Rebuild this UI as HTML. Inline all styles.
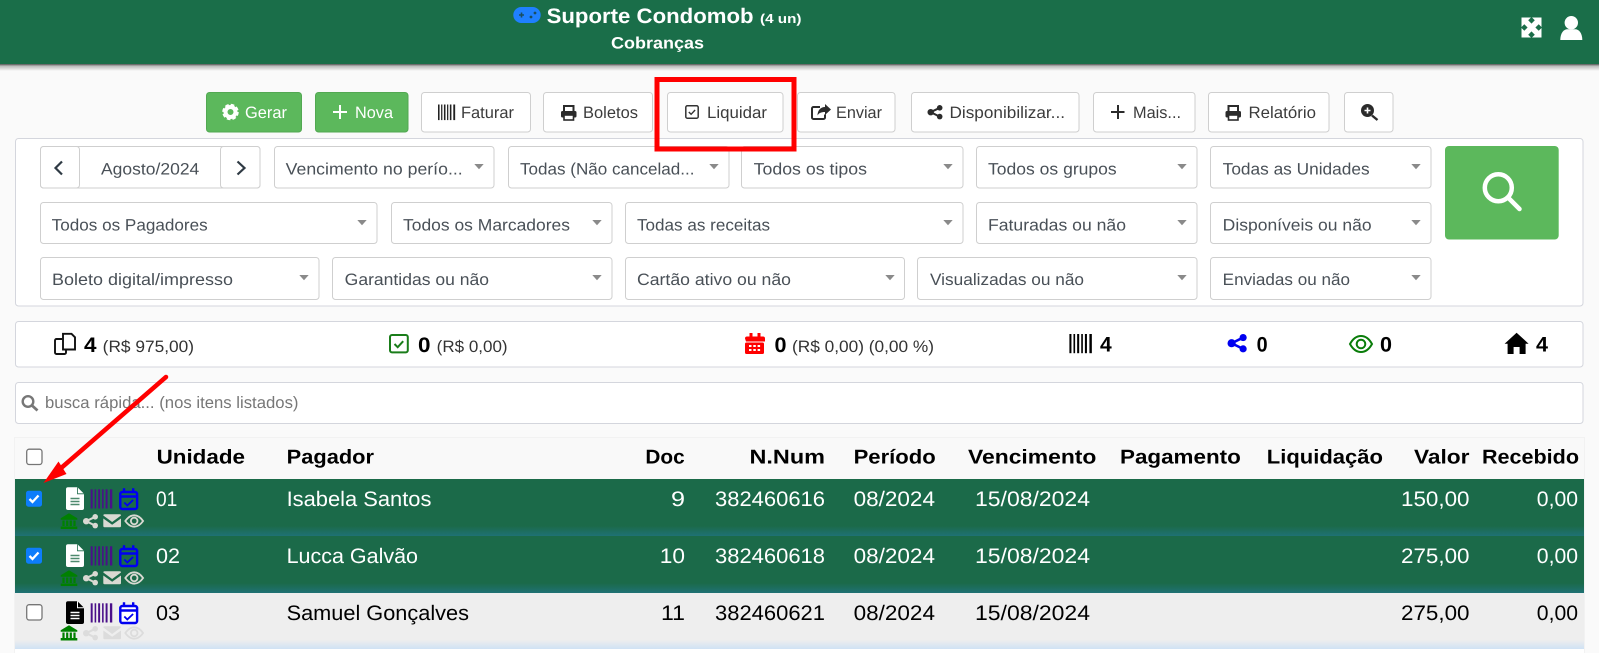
<!DOCTYPE html>
<html lang="pt-BR"><head><meta charset="utf-8"><title>Cobranças</title>
<style>
html,body{margin:0;padding:0;background:#fafafa;width:1599px;height:653px;overflow:hidden}
svg{display:block;font-family:"Liberation Sans",sans-serif;text-rendering:geometricPrecision}
text{lengthAdjust:spacingAndGlyphs}
.box{fill:#fff;stroke:#d4d6dd;stroke-width:1}
.btn{fill:#fff;stroke:#cfcfcf;stroke-width:1}
.bt{font-size:16.5px;fill:#3c3c3c}
.sel{font-size:16.5px;fill:#495057}
.th{font-size:20px;font-weight:bold;fill:#000}
.w{font-size:21px;fill:#fff}
.k{font-size:21px;fill:#000}
.n{font-size:21px;font-weight:bold;fill:#000}
.s{font-size:16.5px;fill:#333}
</style></head><body>
<svg xmlns="http://www.w3.org/2000/svg" width="1599" height="653" viewBox="0 0 1599 653">
<defs>
<linearGradient id="hs" x1="0" y1="0" x2="0" y2="1"><stop offset="0" stop-color="#555"/><stop offset=".3" stop-color="#bbb"/><stop offset="1" stop-color="#fafafa"/></linearGradient>
<linearGradient id="gr" x1="0" y1="0" x2="0" y2="1"><stop offset="0" stop-color="#1b6a49"/><stop offset="1" stop-color="#1f7174"/></linearGradient>
<linearGradient id="bl" x1="0" y1="0" x2="0" y2="1"><stop offset="0" stop-color="#eeeeee"/><stop offset="1" stop-color="#cfe2f4"/></linearGradient>
<g id="bc"><rect x="0" y="0" width="2" height="20"/><rect x="4" y="0" width="1.6" height="20"/><rect x="7.6" y="0" width="2" height="20"/><rect x="11.6" y="0" width="1.6" height="20"/><rect x="15.2" y="0" width="2" height="20"/><rect x="19.6" y="0" width="2.4" height="20"/></g>
<g id="arrow"><path d="M0 0h9.4l-4.7 5.3z" fill="#8a8a8a"/></g>
<g id="share"><circle cx="3.2" cy="7.2" r="3.2"/><circle cx="12.2" cy="2.8" r="2.8"/><circle cx="12.2" cy="11.6" r="2.8"/><path d="M3.2 7.2L12.2 2.8M3.2 7.2L12.2 11.6" stroke="currentColor" stroke-width="2" fill="none"/></g>
<g id="printer"><path d="M3 6V1h9.5V6" fill="none" stroke="currentColor" stroke-width="2"/><rect x="0" y="6" width="15.5" height="6.5" rx="1.5"/><rect x="3" y="10" width="9.5" height="5" fill="#fff" stroke="currentColor" stroke-width="1.6"/></g>
</defs>

<!-- header -->
<rect width="1599" height="64" fill="#1a6e49"/>
<rect y="64" width="1599" height="7" fill="url(#hs)"/>
<rect x="513.3" y="7" width="27.4" height="16" rx="8" fill="#1f80ff"/>
<path d="M519 15h5M521.500 12.500v5" stroke="#1a4e60" stroke-width="1.6"/><circle cx="531" cy="17" r="1.400" fill="#1a4e60"/><circle cx="535" cy="13" r="1.400" fill="#1a4e60"/>
<text x="546.6" y="23" font-size="21" font-weight="bold" fill="#fff" textLength="207" lengthAdjust="spacingAndGlyphs">Suporte Condomob</text>
<text x="760" y="23" font-size="13" font-weight="bold" fill="#fff" textLength="41.5" lengthAdjust="spacingAndGlyphs">(4 un)</text>
<text x="611" y="48.500" font-size="16.500" font-weight="bold" fill="#fff" textLength="93" lengthAdjust="spacingAndGlyphs">Cobranças</text>
<g fill="#fff"><path d="M1521.500 17.500h9.500l-2.800 2.800 3.300 3.300 3.300-3.300-2.800-2.800h9.500v9.500l-2.800-2.800-3.300 3.300 3.300 3.300 2.800-2.800v9.500h-9.500l2.800-2.800-3.300-3.300-3.300 3.300 2.800 2.800h-9.500v-9.500l2.800 2.800 3.300-3.300-3.300-3.300-2.800 2.800z"/>
<circle cx="1571.300" cy="22.700" r="6.700"/><path d="M1560.300 40c0-7 3.500-10.700 7-10.700h8c3.500 0 7 3.700 7 10.700z"/></g>

<!-- toolbar -->
<rect x="206.500" y="92.500" width="95" height="39.500" rx="3" fill="#5cb85c" stroke="#52a852"/>
<rect x="315.500" y="92.500" width="92.500" height="39.500" rx="3" fill="#5cb85c" stroke="#52a852"/>
<rect class="btn" x="421.500" y="92.500" width="109" height="39.500" rx="3"/>
<rect class="btn" x="543.500" y="92.500" width="109" height="39.500" rx="3"/>
<rect class="btn" x="667.500" y="92.500" width="115.500" height="39.500" rx="3"/>
<rect class="btn" x="797.500" y="92.500" width="97.500" height="39.500" rx="3"/>
<rect class="btn" x="911.500" y="92.500" width="167.500" height="39.500" rx="3"/>
<rect class="btn" x="1093.500" y="92.500" width="101.500" height="39.500" rx="3"/>
<rect class="btn" x="1208.500" y="92.500" width="120.500" height="39.500" rx="3"/>
<rect class="btn" x="1344.500" y="92.500" width="48.500" height="39.500" rx="3"/>

<circle cx="230.500" cy="112" r="5" fill="none" stroke="#fff" stroke-width="4"/><circle cx="230.500" cy="112" r="7" fill="none" stroke="#fff" stroke-width="2.500" stroke-dasharray="3.500 2"/>
<text class="bt" style="fill:#fff" x="245" y="118" textLength="42" lengthAdjust="spacingAndGlyphs">Gerar</text>
<path d="M340 105v14M333 112h14" stroke="#fff" stroke-width="2"/>
<text class="bt" style="fill:#fff" x="355" y="118" textLength="38" lengthAdjust="spacingAndGlyphs">Nova</text>
<use href="#bc" transform="translate(438 104.500) scale(.78 .78)" fill="#222"/>
<text class="bt" x="461" y="118" textLength="53" lengthAdjust="spacingAndGlyphs">Faturar</text>
<use href="#printer" transform="translate(561 105)" color="#2b2b2b" fill="#2b2b2b"/>
<text class="bt" x="583" y="118" textLength="55" lengthAdjust="spacingAndGlyphs">Boletos</text>
<rect x="685.800" y="105.800" width="12.400" height="12.400" rx="1.500" fill="none" stroke="#333" stroke-width="1.500"/><path d="M688.800 112l2.300 2.300 4-4.300" fill="none" stroke="#333" stroke-width="1.400"/>
<text class="bt" x="707" y="118" textLength="60" lengthAdjust="spacingAndGlyphs">Liquidar</text>
<path d="M820 107h-6.500a1.500 1.500 0 0 0-1.500 1.500v9a1.500 1.500 0 0 0 1.500 1.500h10a1.500 1.500 0 0 0 1.500-1.500v-3" fill="none" stroke="#2b2b2b" stroke-width="2"/><path d="M825 104l6 5.500-6 5.500v-3c-4 0-6 1-7.500 3.500 0-5 3-8.500 7.500-8.500z" fill="#2b2b2b"/>
<text class="bt" x="836" y="118" textLength="46" lengthAdjust="spacingAndGlyphs">Enviar</text>
<use href="#share" transform="translate(927.500 105)" color="#2b2b2b" fill="#2b2b2b"/>
<text class="bt" x="949.500" y="118" textLength="115.500" lengthAdjust="spacingAndGlyphs">Disponibilizar...</text>
<path d="M1118 105v14M1111 112h13.500" stroke="#2b2b2b" stroke-width="2"/>
<text class="bt" x="1133" y="118" textLength="48" lengthAdjust="spacingAndGlyphs">Mais...</text>
<use href="#printer" transform="translate(1225.500 105)" color="#2b2b2b" fill="#2b2b2b"/>
<text class="bt" x="1248.500" y="118" textLength="67.500" lengthAdjust="spacingAndGlyphs">Relatório</text>
<circle cx="1367.500" cy="110.500" r="6.500" fill="#2b2b2b"/><path d="M1372 115.500l5.500 4.500" stroke="#2b2b2b" stroke-width="2.400"/><path d="M1367.500 107.500v6M1364.500 110.500h6" stroke="#fff" stroke-width="1.600"/>

<!-- filter panel -->
<rect class="box" x="15.500" y="138.500" width="1567.500" height="167.500" rx="3"/>
<rect class="btn" x="40.500" y="146.500" width="219.500" height="41.500" rx="3" stroke="#ccd0d8"/>
<rect class="btn" x="40.500" y="146.500" width="39" height="41.500" rx="3" stroke="#ccd0d8"/>
<rect class="btn" x="220.500" y="146.500" width="39.500" height="41.500" rx="3" stroke="#ccd0d8"/>
<path d="M62 161.500l-6.500 6.500 6.500 6.500" fill="none" stroke="#2f3a44" stroke-width="2.200"/><path d="M237.500 161.500l7 6.500-7 6.500" fill="none" stroke="#2f3a44" stroke-width="2.200"/>
<text class="sel" x="101" y="174.300" textLength="98.300" lengthAdjust="spacingAndGlyphs">Agosto/2024</text>

<g class="btn" stroke="#ccd0d8">
<rect x="274.500" y="146.500" width="219.500" height="41.500" rx="3"/>
<rect x="508.500" y="146.500" width="220.500" height="41.500" rx="3"/>
<rect x="741.500" y="146.500" width="221.500" height="41.500" rx="3"/>
<rect x="976.500" y="146.500" width="220.500" height="41.500" rx="3"/>
<rect x="1210.500" y="146.500" width="220.500" height="41.500" rx="3"/>
<rect x="40.500" y="202.500" width="336.500" height="41" rx="3"/>
<rect x="391.500" y="202.500" width="220.500" height="41" rx="3"/>
<rect x="625.500" y="202.500" width="337.500" height="41" rx="3"/>
<rect x="976.500" y="202.500" width="220.500" height="41" rx="3"/>
<rect x="1210.500" y="202.500" width="220.500" height="41" rx="3"/>
<rect x="40.500" y="257.500" width="278.500" height="42" rx="3"/>
<rect x="332.500" y="257.500" width="279.500" height="42" rx="3"/>
<rect x="625.500" y="257.500" width="279" height="42" rx="3"/>
<rect x="917.500" y="257.500" width="279.500" height="42" rx="3"/>
<rect x="1210.500" y="257.500" width="220.500" height="42" rx="3"/>
</g>
<g class="sel">
<text x="285.700" y="174.300" textLength="177" lengthAdjust="spacingAndGlyphs">Vencimento no perío...</text>
<text x="520" y="174.300" textLength="174.500" lengthAdjust="spacingAndGlyphs">Todas (Não cancelad...</text>
<text x="753.600" y="174.300" textLength="113.400" lengthAdjust="spacingAndGlyphs">Todos os tipos</text>
<text x="988" y="174.300" textLength="128.700" lengthAdjust="spacingAndGlyphs">Todos os grupos</text>
<text x="1222.700" y="174.300" textLength="146.900" lengthAdjust="spacingAndGlyphs">Todas as Unidades</text>
<text x="51.700" y="230.300" textLength="156" lengthAdjust="spacingAndGlyphs">Todos os Pagadores</text>
<text x="403" y="230.300" textLength="167" lengthAdjust="spacingAndGlyphs">Todos os Marcadores</text>
<text x="637" y="230.300" textLength="133" lengthAdjust="spacingAndGlyphs">Todas as receitas</text>
<text x="988" y="230.300" textLength="138" lengthAdjust="spacingAndGlyphs">Faturadas ou não</text>
<text x="1222.700" y="230.300" textLength="148.900" lengthAdjust="spacingAndGlyphs">Disponíveis ou não</text>
<text x="52" y="285" textLength="181" lengthAdjust="spacingAndGlyphs">Boleto digital/impresso</text>
<text x="344.700" y="285" textLength="144.300" lengthAdjust="spacingAndGlyphs">Garantidas ou não</text>
<text x="637" y="285" textLength="154" lengthAdjust="spacingAndGlyphs">Cartão ativo ou não</text>
<text x="930" y="285" textLength="154" lengthAdjust="spacingAndGlyphs">Visualizadas ou não</text>
<text x="1222.700" y="285" textLength="127.300" lengthAdjust="spacingAndGlyphs">Enviadas ou não</text>
</g>
<use href="#arrow" x="474.300" y="164"/><use href="#arrow" x="709.300" y="164"/><use href="#arrow" x="943.300" y="164"/><use href="#arrow" x="1177.300" y="164"/><use href="#arrow" x="1411.300" y="164"/>
<use href="#arrow" x="357.300" y="220"/><use href="#arrow" x="592.300" y="220"/><use href="#arrow" x="943.300" y="220"/><use href="#arrow" x="1177.300" y="220"/><use href="#arrow" x="1411.300" y="220"/>
<use href="#arrow" x="299.300" y="275"/><use href="#arrow" x="592.300" y="275"/><use href="#arrow" x="885.300" y="275"/><use href="#arrow" x="1177.300" y="275"/><use href="#arrow" x="1411.300" y="275"/>

<rect x="1445" y="146" width="113.700" height="93.500" rx="4" fill="#5cb85c"/>
<circle cx="1498.300" cy="187.700" r="13.500" fill="none" stroke="#fff" stroke-width="4.500"/><path d="M1508.500 198l11 11" stroke="#fff" stroke-width="4.500" stroke-linecap="round"/>

<!-- stats -->
<rect class="box" x="15.500" y="321.500" width="1567.500" height="45.500" rx="3"/>
<path d="M63 333.800h8.500l3.500 3.500v12.200h-12z" fill="none" stroke="#111" stroke-width="1.900"/><path d="M62 339h-5.500a1.500 1.500 0 0 0-1.500 1.500v12a1.500 1.500 0 0 0 1.500 1.500h8a1.500 1.500 0 0 0 1.500-1.500v-3" fill="none" stroke="#111" stroke-width="1.900"/>
<text class="n" x="84" y="352" textLength="12.500" lengthAdjust="spacingAndGlyphs">4</text>
<text class="s" x="102.700" y="352" textLength="91.300" lengthAdjust="spacingAndGlyphs">(R$ 975,00)</text>
<rect x="390" y="335" width="17.800" height="17.400" rx="2" fill="none" stroke="#1a7d1a" stroke-width="2"/><path d="M394.500 344l3.200 3.200 5.500-6" fill="none" stroke="#1a7d1a" stroke-width="2"/>
<text class="n" x="418" y="352" textLength="12.500" lengthAdjust="spacingAndGlyphs">0</text>
<text class="s" x="436.700" y="352" textLength="70.900" lengthAdjust="spacingAndGlyphs">(R$ 0,00)</text>
<path d="M745 338.500a2 2 0 0 1 2-2h2.500v-3.500h3v3.500h5v-3.500h3v3.500h2.500a2 2 0 0 1 2 2v3h-19z" fill="#f00"/><rect x="745" y="342.500" width="19" height="11.500" rx="1.500" fill="#f00"/><path d="M749 345h2.500v2h-2.500zm4.300 0h2.500v2h-2.500zm4.300 0h2.500v2h-2.500zm-8.600 4h2.500v2h-2.500zm4.300 0h2.500v2h-2.500zm4.300 0h2.500v2h-2.500z" fill="#fff"/>
<text class="n" x="774.500" y="352" textLength="12" lengthAdjust="spacingAndGlyphs">0</text>
<text class="s" x="792" y="352" textLength="142" lengthAdjust="spacingAndGlyphs">(R$ 0,00) (0,00 %)</text>
<use href="#bc" transform="translate(1069.400 334) scale(1.020 .96)" fill="#000"/>
<text class="n" x="1100" y="351.700" textLength="11.700" lengthAdjust="spacingAndGlyphs">4</text>
<use href="#share" transform="translate(1227.500 334) scale(1.280)" color="#0000f0" fill="#0000f0"/>
<text class="n" x="1256.600" y="351.700" textLength="11" lengthAdjust="spacingAndGlyphs">0</text>
<path d="M1350 344c3-5.500 7-8 11-8s8 2.500 11 8c-3 5.500-7 8-11 8s-8-2.500-11-8z" fill="none" stroke="#0a7d0a" stroke-width="2"/><circle cx="1361" cy="344" r="4.300" fill="none" stroke="#0a7d0a" stroke-width="2"/>
<text class="n" x="1380" y="351.700" textLength="12" lengthAdjust="spacingAndGlyphs">0</text>
<path d="M1516.600 332.700l12 11h-3v10.300h-6v-7h-6v7h-6v-10.300h-3z" fill="#000"/>
<text class="n" x="1536" y="351.700" textLength="12" lengthAdjust="spacingAndGlyphs">4</text>

<!-- quick search -->
<rect class="box" x="15.500" y="382.500" width="1567.500" height="41" rx="3"/>
<circle cx="28" cy="401.500" r="5.300" fill="none" stroke="#777" stroke-width="2.400"/><path d="M32 405.500l5.500 5" stroke="#777" stroke-width="2.800"/>
<text x="45" y="408" font-size="16.500" fill="#777" textLength="253.500" lengthAdjust="spacingAndGlyphs">busca rápida... (nos itens listados)</text>

<!-- table -->
<rect x="14" y="437" width="1571" height="216" fill="#f2f2f2"/>
<rect x="15" y="438" width="1569" height="41" fill="#f9f9f9"/>
<rect x="15" y="649" width="1569" height="4" fill="#fff"/>
<rect x="26.700" y="449.200" width="15.300" height="15.300" rx="2.500" fill="#fff" stroke="#767676" stroke-width="1.300"/>
<g class="th">
<text x="156.600" y="463.300" textLength="88.400" lengthAdjust="spacingAndGlyphs">Unidade</text>
<text x="286.700" y="463.300" textLength="87.300" lengthAdjust="spacingAndGlyphs">Pagador</text>
<text x="645.400" y="463.300" textLength="39.300" lengthAdjust="spacingAndGlyphs">Doc</text>
<text x="749.500" y="463.300" textLength="75.500" lengthAdjust="spacingAndGlyphs">N.Num</text>
<text x="853.600" y="463.300" textLength="82.100" lengthAdjust="spacingAndGlyphs">Período</text>
<text x="968" y="463.300" textLength="128.400" lengthAdjust="spacingAndGlyphs">Vencimento</text>
<text x="1120" y="463.300" textLength="120.800" lengthAdjust="spacingAndGlyphs">Pagamento</text>
<text x="1266.800" y="463.300" textLength="116.200" lengthAdjust="spacingAndGlyphs">Liquidação</text>
<text x="1414" y="463.300" textLength="55.500" lengthAdjust="spacingAndGlyphs">Valor</text>
<text x="1482" y="463.300" textLength="97" lengthAdjust="spacingAndGlyphs">Recebido</text>
</g>

<!-- rows backgrounds -->
<rect x="15" y="479" width="1569" height="47" fill="#1b6a49"/><rect x="15" y="526" width="1569" height="10" fill="url(#gr)"/>
<rect x="15" y="536" width="1569" height="47" fill="#1b6a49"/><rect x="15" y="583" width="1569" height="10" fill="url(#gr)"/>
<rect x="15" y="593" width="1569" height="47" fill="#eeeeee"/><rect x="15" y="640" width="1569" height="9" fill="url(#bl)"/>

<!-- row 1 -->
<g id="r1">
<rect x="26" y="490.700" width="16" height="16" rx="2.500" fill="#0d7dfb"/><path d="M29.500 499l3 3 6-6.500" fill="none" stroke="#fff" stroke-width="2.300"/>
<path d="M68 487.300h9.500l6.500 6.500v14.200a2 2 0 0 1-2 2h-14a2 2 0 0 1-2-2v-18.700a2 2 0 0 1 2-2z" fill="#fff"/><path d="M77.500 487.300v6.500h6.500" fill="none" stroke="#1b6a49" stroke-width=".8"/><path d="M70.500 498.500h9M70.500 501.500h9M70.500 504.500h9" stroke="#4d8a6e" stroke-width="1.400"/>
<use href="#bc" transform="translate(90.700 489.300) scale(.98 .96)" fill="#4a1089"/>
<rect x="120.300" y="492" width="16.800" height="17" rx="2" fill="none" stroke="#0000f0" stroke-width="2.400"/><path d="M120 496.500h17.500" stroke="#0000f0" stroke-width="2.400"/><path d="M124 488.300v4M133.200 488.300v4" stroke="#0000f0" stroke-width="2.400"/><path d="M124.300 502.500l3 3 5.800-5.500" fill="none" stroke="#0000f0" stroke-width="1.800"/>
<path d="M69 513.300l8.300 5v1.500h-16.600v-1.500z" fill="#008000"/><path d="M63.500 520.500v5.500M67.200 520.500v5.500M70.800 520.500v5.500M74.500 520.500v5.500" stroke="#008000" stroke-width="2.200"/><rect x="60.700" y="526.500" width="16.600" height="2.500" fill="#008000"/>
<use href="#share" transform="translate(83 514)" color="#d9d9d2" fill="#d9d9d2"/>
<path d="M103.300 515.500a1.200 1.200 0 0 1 1.200-1.200h15.300a1.200 1.200 0 0 1 1.200 1.200l-8.850 6.500zM103.300 518.500v7.600a1.200 1.200 0 0 0 1.200 1.200h15.300a1.200 1.200 0 0 0 1.200-1.200v-7.600l-8.850 6.300z" fill="#d9d9d2"/>
<path d="M125.300 521c2.800-4 5.800-5.700 8.900-5.700s6.100 1.700 8.900 5.700c-2.800 4-5.800 5.700-8.900 5.700s-6.100-1.700-8.900-5.700z" fill="none" stroke="#d9d9d2" stroke-width="1.800"/><circle cx="134.200" cy="521" r="3.300" fill="none" stroke="#d9d9d2" stroke-width="1.800"/>
</g>
<!-- row 2 -->
<use href="#r1" y="57"/>
<!-- row 3 -->
<g>
<rect x="26.700" y="604.700" width="15.300" height="15.300" rx="2.500" fill="#fff" stroke="#767676" stroke-width="1.300"/>
<path d="M68 601.300h9.500l6.500 6.500v14.200a2 2 0 0 1-2 2h-14a2 2 0 0 1-2-2v-18.700a2 2 0 0 1 2-2z" fill="#000"/><path d="M77.500 601.300v6.500h6.500" fill="none" stroke="#fff" stroke-width="1"/><path d="M70.500 612.500h9M70.500 615.500h9M70.500 618.500h9" stroke="#fff" stroke-width="1.400"/>
<use href="#bc" transform="translate(90.700 603.300) scale(.98 .96)" fill="#4a1089"/>
<rect x="120.300" y="606" width="16.800" height="17" rx="2" fill="#fff" stroke="#0000f0" stroke-width="2.400"/><path d="M120 610.500h17.500" stroke="#0000f0" stroke-width="2.400"/><path d="M124 602.300v4M133.200 602.300v4" stroke="#0000f0" stroke-width="2.400"/><path d="M124.300 616.500l3 3 5.800-5.500" fill="none" stroke="#0000f0" stroke-width="1.800"/>
<path d="M69 625.300l8.300 5v1.500h-16.600v-1.500z" fill="#008000"/><path d="M63.500 632.500v5.500M67.200 632.500v5.500M70.800 632.500v5.500M74.500 632.500v5.500" stroke="#008000" stroke-width="2.200"/><rect x="60.700" y="638" width="16.600" height="2.500" fill="#008000"/>
<use href="#share" transform="translate(83 626)" color="#dcdcdc" fill="#dcdcdc"/>
<path d="M103.300 627.500a1.200 1.200 0 0 1 1.200-1.200h15.300a1.200 1.200 0 0 1 1.200 1.200l-8.850 6.500zM103.300 630.500v7.600a1.200 1.200 0 0 0 1.200 1.200h15.300a1.200 1.200 0 0 0 1.200-1.200v-7.600l-8.850 6.300z" fill="#dcdcdc"/>
<path d="M125.300 633c2.800-4 5.800-5.700 8.900-5.700s6.100 1.700 8.900 5.700c-2.800 4-5.800 5.700-8.900 5.700s-6.100-1.700-8.900-5.700z" fill="none" stroke="#dcdcdc" stroke-width="1.800"/><circle cx="134.200" cy="633" r="3.300" fill="none" stroke="#dcdcdc" stroke-width="1.800"/>
</g>

<g class="w">
<text x="156" y="506" textLength="21.300" lengthAdjust="spacingAndGlyphs">01</text>
<text x="286.600" y="506" textLength="144.800" lengthAdjust="spacingAndGlyphs">Isabela Santos</text>
<text x="671" y="506" textLength="14" lengthAdjust="spacingAndGlyphs">9</text>
<text x="715" y="506" textLength="110" lengthAdjust="spacingAndGlyphs">382460616</text>
<text x="853.600" y="506" textLength="81.400" lengthAdjust="spacingAndGlyphs">08/2024</text>
<text x="975" y="506" textLength="115" lengthAdjust="spacingAndGlyphs">15/08/2024</text>
<text x="1401" y="506" textLength="68.500" lengthAdjust="spacingAndGlyphs">150,00</text>
<text x="1536.800" y="506" textLength="41.200" lengthAdjust="spacingAndGlyphs">0,00</text>
<text x="156" y="563" textLength="24" lengthAdjust="spacingAndGlyphs">02</text>
<text x="286.600" y="563" textLength="131.400" lengthAdjust="spacingAndGlyphs">Lucca Galvão</text>
<text x="659.800" y="563" textLength="25.200" lengthAdjust="spacingAndGlyphs">10</text>
<text x="715" y="563" textLength="110" lengthAdjust="spacingAndGlyphs">382460618</text>
<text x="853.600" y="563" textLength="81.400" lengthAdjust="spacingAndGlyphs">08/2024</text>
<text x="975" y="563" textLength="115" lengthAdjust="spacingAndGlyphs">15/08/2024</text>
<text x="1401" y="563" textLength="68.500" lengthAdjust="spacingAndGlyphs">275,00</text>
<text x="1536.800" y="563" textLength="41.200" lengthAdjust="spacingAndGlyphs">0,00</text>
</g>
<g class="k">
<text x="156" y="620" textLength="24" lengthAdjust="spacingAndGlyphs">03</text>
<text x="286.600" y="620" textLength="182.400" lengthAdjust="spacingAndGlyphs">Samuel Gonçalves</text>
<text x="661" y="620" textLength="24" lengthAdjust="spacingAndGlyphs">11</text>
<text x="715" y="620" textLength="110" lengthAdjust="spacingAndGlyphs">382460621</text>
<text x="853.600" y="620" textLength="81.400" lengthAdjust="spacingAndGlyphs">08/2024</text>
<text x="975" y="620" textLength="115" lengthAdjust="spacingAndGlyphs">15/08/2024</text>
<text x="1401" y="620" textLength="68.500" lengthAdjust="spacingAndGlyphs">275,00</text>
<text x="1536.800" y="620" textLength="41.200" lengthAdjust="spacingAndGlyphs">0,00</text>
</g>

<!-- annotations -->
<rect x="657" y="79.500" width="137" height="69.500" fill="none" stroke="#f00" stroke-width="5"/>
<path d="M166 377L60 469" stroke="#f00" stroke-width="4.500" stroke-linecap="round"/>
<path d="M43.500 483L58.500 461.500L66.500 474z" fill="#f00"/>
</svg>
</body></html>
